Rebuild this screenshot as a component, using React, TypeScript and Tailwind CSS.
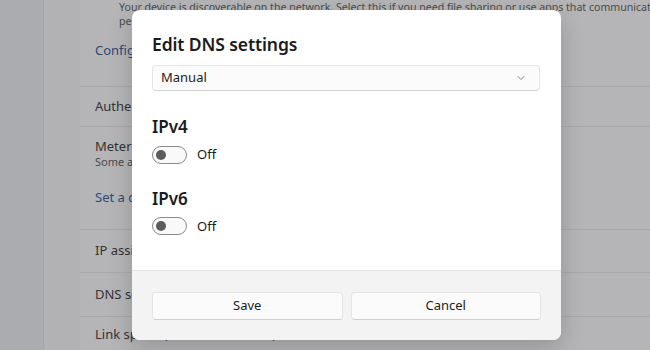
import { ChevronDown } from 'lucide-react'

const font = { fontFamily: '"Segoe UI", "Noto Sans", "Open Sans", sans-serif' }

function Toggle() {
  return (
    <div className="flex h-[18px] w-[35px] items-center rounded-full border border-[#8a8a8a] bg-[#f9f9f9] px-[3px]">
      <div className="h-[10px] w-[10px] rounded-full bg-[#5c5c5c]" />
    </div>
  )
}

function Row({ children, className = '' }: { children: React.ReactNode; className?: string }) {
  return <div className={`border-b border-[#a9a9ab] px-[15px] ${className}`}>{children}</div>
}

export default function App() {
  return (
    <div className="relative h-[350px] w-[650px] overflow-hidden bg-[#b2b2b4] text-[#333] antialiased" style={font}>
      <div className="flex h-full">
        <div className="w-[44px] shrink-0 border-r border-[#a3a4a7] bg-[#abacaf]" />
        <div className="min-w-0 flex-1 pl-[36px]">
          <div className="bg-[#b5b5b7]">
            <Row className="h-[87px] overflow-hidden">
              <p className="whitespace-nowrap pl-[24px] text-[10.6px] leading-[14px] text-[#4a4a4a]">
                Your device is discoverable on the network. Select this if you need file sharing or use apps that communicate over
                <br />
                peer-to-peer
              </p>
              <p className="mt-[13px] whitespace-nowrap text-[13px] text-[#2c4a78]">Configure firewall and security settings</p>
            </Row>
            <Row className="flex h-[40px] items-center">
              <span className="text-[13px]">Authentication settings</span>
            </Row>
            <Row className="h-[103px] pt-[10px]">
              <p className="text-[13px] leading-[18px]">Metered connection</p>
              <p className="text-[11px] leading-[14px] text-[#4a4a4a]">Some apps might work differently</p>
              <p className="mt-[19px] text-[13px] text-[#2c4a78]">Set a data limit</p>
            </Row>
            <Row className="flex h-[43px] items-center">
              <span className="text-[13px]">IP assignment:</span>
            </Row>
            <Row className="flex h-[44px] items-center">
              <span className="text-[13px]">DNS server assignment:</span>
            </Row>
            <Row className="flex h-[36px] items-center border-b-0">
              <span className="text-[13px]">Link speed (Receive/Transmit):</span>
            </Row>
          </div>
        </div>
      </div>

      <div className="absolute left-[132px] top-[10px] flex h-[330px] w-[429px] flex-col overflow-hidden rounded-[8px] bg-white shadow-[0_8px_24px_rgba(0,0,0,0.18)]">
        <div className="flex-1 px-[20px] pt-[20px]">
          <h1 className="text-[17.5px] font-semibold leading-[28px] tracking-[-0.1px] text-[#1b1b1b]">Edit DNS settings</h1>
          <div className="mt-[7px] flex h-[26px] w-[388px] items-center justify-between rounded-[4px] border border-[#e6e6e6] border-b-[#d4d4d4] bg-[#fbfbfb] pl-[8px] pr-[12px]">
            <span className="text-[13px] text-[#1b1b1b]">Manual</span>
            <ChevronDown size={12} strokeWidth={1.5} className="text-[#5a5a5a]" />
          </div>
          <h2 className="mt-[24px] text-[17px] font-semibold leading-[24px] text-[#1b1b1b]">IPv4</h2>
          <div className="mt-[6px] flex items-center gap-[10px]">
            <Toggle />
            <span className="text-[13px] text-[#1b1b1b]">Off</span>
          </div>
          <h2 className="mt-[22px] text-[17px] font-semibold leading-[24px] text-[#1b1b1b]">IPv6</h2>
          <div className="mt-[6px] flex items-center gap-[10px]">
            <Toggle />
            <span className="text-[13px] text-[#1b1b1b]">Off</span>
          </div>
        </div>
        <div className="flex h-[70px] gap-[8px] border-t border-[#e5e5e5] bg-[#f3f3f3] px-[20px] pt-[21px]">
          <button className="h-[28px] flex-1 rounded-[4px] border border-[#e5e5e5] border-b-[#d0d0d0] bg-[#fbfbfb] text-[13px] text-[#1b1b1b]">Save</button>
          <button className="h-[28px] flex-1 rounded-[4px] border border-[#e5e5e5] border-b-[#d0d0d0] bg-[#fbfbfb] text-[13px] text-[#1b1b1b]">Cancel</button>
        </div>
      </div>
    </div>
  )
}
